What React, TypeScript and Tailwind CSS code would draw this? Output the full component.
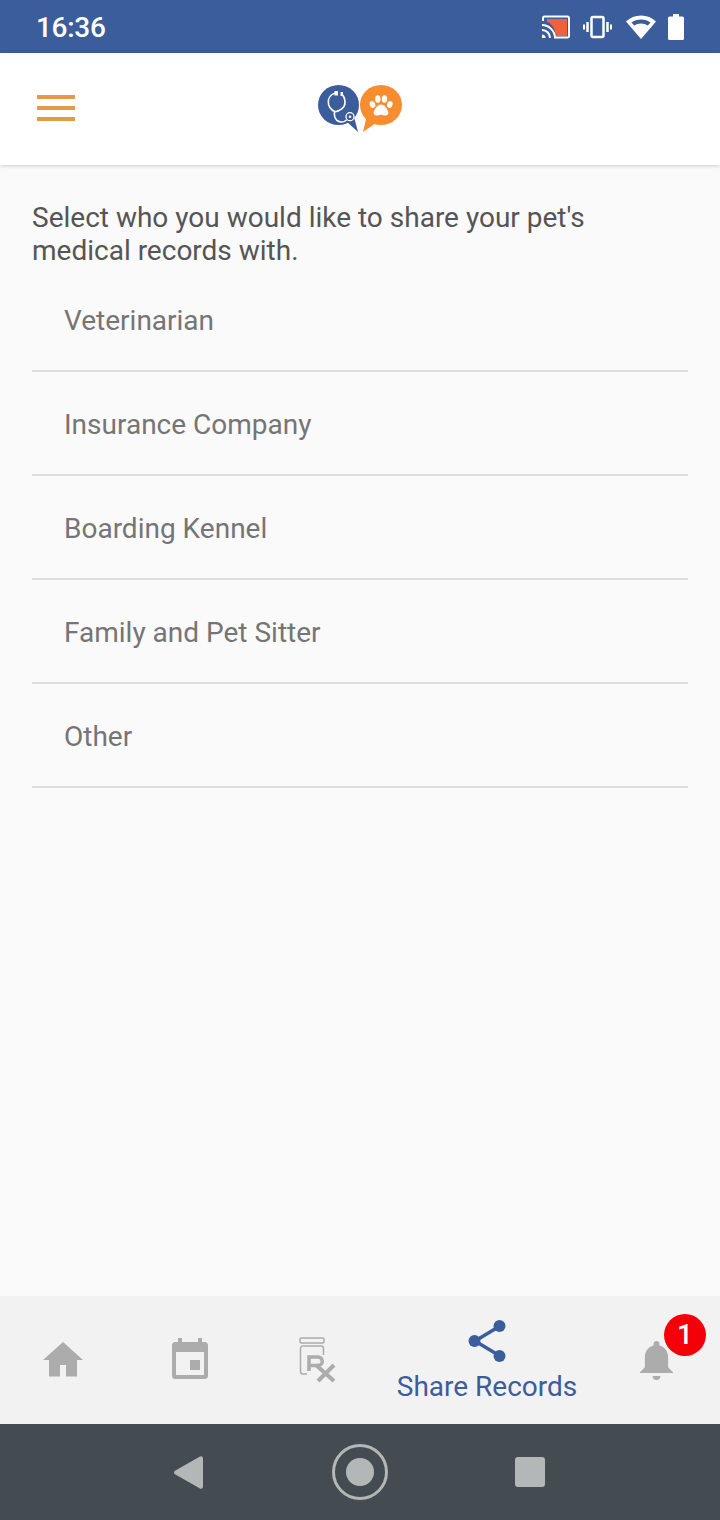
const ROWS = ["Veterinarian", "Insurance Company", "Boarding Kennel", "Family and Pet Sitter", "Other"];

function StatusIcons() {
  return (
    <div className="flex items-center">
      {/* cast */}
      <svg width="30" height="24" viewBox="0 0 30 24" className="mr-[12px]">
        <path d="M6 4h20v17H15C14 13.500 10.500 8 6 7z" fill="#f0603a" />
        <path d="M2 6V3A1.500 1.500 0 0 1 3.500 1.500h23A1.500 1.500 0 0 1 28 3v18a1.500 1.500 0 0 1-1.500 1.500H13" fill="none" stroke="#fff" strokeWidth="2" />
        <path d="M1 10c7 0 13 6 13 13M1 15c4.500 0 8 3.500 8 8" fill="none" stroke="#fff" strokeWidth="2" />
        <path d="M1 19.500a3.500 3.500 0 0 1 3.500 3.500H1z" fill="#fff" />
      </svg>
      {/* vibrate */}
      <svg width="29" height="24" viewBox="0 0 29 24" className="mr-[14px]">
        <rect x="8.500" y="2" width="12" height="20" rx="1.500" fill="none" stroke="#fff" strokeWidth="2.500" />
        <path d="M4.500 7v10M24.500 7v10" stroke="#fff" strokeWidth="2.500" />
        <path d="M1 9.500v5M28 9.500v5" stroke="#fff" strokeWidth="2" />
      </svg>
      {/* wifi */}
      <svg width="30" height="24" viewBox="0 0 30 24" className="mr-[12px]">
        <path d="M15 24 0 6.500C4 2.800 9.200 0.500 15 0.500S26 2.800 30 6.500z" fill="#fff" />
        <path d="M5.500 7.500C8 5.700 11.300 4.500 15 4.500s7 1.200 9.500 3l-2.700 3.100C19.900 9.300 17.600 8.500 15 8.500s-4.900.8-6.800 2.100z" fill="#3b5d9b" />
      </svg>
      {/* battery */}
      <svg width="16" height="26" viewBox="0 0 16 26">
        <path d="M5 0h6v2.500h3.500A1.500 1.500 0 0 1 16 4v20.500a1.500 1.500 0 0 1-1.500 1.500h-13A1.500 1.500 0 0 1 0 24.500V4a1.500 1.500 0 0 1 1.500-1.500H5z" fill="#fff" />
      </svg>
    </div>
  );
}

function Logo() {
  return (
    <svg width="86" height="48" viewBox="0 0 86 48">
      {/* blue bubble */}
      <ellipse cx="20.500" cy="20" rx="20.500" ry="20" fill="#3b5d9b" />
      <path d="M28 36l7-8 5 19z" fill="#3b5d9b" />
      {/* stethoscope */}
      <path d="M17 8.300c-4 1-6.700 4.500-6.700 8.400 0 4.500 2.500 8 6.700 10 4.500-.5 10-4 10-9 0-3.500-1-6.500-3.300-8.200" fill="none" stroke="#fff" strokeWidth="1.600" />
      <path d="M16.500 26.700c-.5 4 .5 7 2.500 8.800 3 2 7 1.800 9.500-.5" fill="none" stroke="#fff" strokeWidth="1.600" />
      <circle cx="32" cy="31.700" r="4" fill="none" stroke="#fff" strokeWidth="1.300" />
      <circle cx="32" cy="31.700" r="1.300" fill="#fff" />
      <path d="M16.500 6h3.500v4.500h-3.500zM22.500 7h2.500v4h-2.500z" fill="#fff" />
      {/* orange bubble */}
      <ellipse cx="63" cy="20" rx="21" ry="20" fill="#f78d2e" />
      <path d="M49 30l9 8-13 9z" fill="#f78d2e" />
      {/* paw */}
      <ellipse cx="54.500" cy="19.500" rx="2.700" ry="3.500" transform="rotate(-20 54.500 19.500)" fill="#fff" />
      <ellipse cx="59.800" cy="14" rx="2.700" ry="3.800" fill="#fff" />
      <ellipse cx="66.500" cy="14" rx="2.700" ry="3.800" fill="#fff" />
      <ellipse cx="71.800" cy="19.500" rx="2.700" ry="3.500" transform="rotate(20 71.800 19.500)" fill="#fff" />
      <path d="M63 19.500c-3 0-5 3-6.500 5.500-1.500 2.500-1 5 1.500 5.500 2 .3 3.300-.7 5-.7s3 1 5 .7c2.500-.5 3-3 1.500-5.500-1.500-2.500-3.500-5.500-6.500-5.500z" fill="#fff" />
    </svg>
  );
}

function RxIcon() {
  return (
    <svg width="37" height="46" viewBox="0 0 37 46">
      <rect x="1" y="1" width="24" height="5" rx="1.500" fill="none" stroke="#acacac" strokeWidth="1.500" />
      <path d="M8 37H4a2.500 2.500 0 0 1-2.500-2.500V11.500A2.500 2.500 0 0 1 4 9h18a2.500 2.500 0 0 1 2.500 2.500V18" fill="none" stroke="#acacac" strokeWidth="1.500" />
      <path d="M10 34V20h9a4 4 0 0 1 0 8.500H10" fill="none" stroke="#acacac" strokeWidth="3.500" />
      <path d="M17 28l18 16M35 28 19 44" fill="none" stroke="#acacac" strokeWidth="4" />
    </svg>
  );
}

export default function App() {
  return (
    <div className="flex h-[1520px] w-[720px] flex-col overflow-hidden bg-[#fafafa] font-['Roboto',sans-serif]">
      <div className="flex h-[53px] shrink-0 items-center justify-between bg-[#3b5d9b] pl-[36px] pr-[36px]">
        <span className="pt-[2px] text-[28px] font-medium leading-none tracking-[-0.3px] text-white">16:36</span>
        <StatusIcons />
      </div>

      <header className="relative flex h-[112px] shrink-0 items-center bg-white shadow-[0_1px_4px_rgba(0,0,0,0.18)]">
        <button className="mb-[2px] ml-[37px] flex w-[38px] flex-col gap-[7px]">
          <span className="h-[4px] bg-[#e49a48]" />
          <span className="h-[4px] bg-[#e49a48]" />
          <span className="h-[4px] bg-[#e49a48]" />
        </button>
        <div className="ml-[243px]">
          <Logo />
        </div>
      </header>

      <main className="flex-1 px-[32px] pt-[36px]">
        <p className="mb-[1px] text-[28px] leading-[33px] text-[#555555]">
          Select who you would like to share your pet's medical records with.
        </p>
        <ul>
          {ROWS.map((row) => (
            <li
              key={row}
              className="flex h-[104px] items-center border-b-2 border-[#dedede] pl-[32px] pt-[4px] text-[28px] text-[#757575]"
            >
              {row}
            </li>
          ))}
        </ul>
      </main>

      <nav className="flex h-[128px] shrink-0 bg-[#f2f2f2]">
        <div className="flex w-[126px] items-center justify-center">
          <svg width="40" height="35" viewBox="0 0 40 35" className="mb-[2px]">
            <path d="M20 0 0 18h6v16.500h11V23h6v11.500h11V18h6z" fill="#acacac" />
          </svg>
        </div>
        <div className="flex w-[128px] items-center justify-center">
          <svg width="36" height="41" viewBox="0 0 36 41" className="mb-[3px]">
            <path fillRule="evenodd" d="M6 0h4v4h16V0h4v4h2.500A3.500 3.500 0 0 1 36 7.500v30a3.500 3.500 0 0 1-3.500 3.500h-29A3.500 3.500 0 0 1 0 37.500v-30A3.500 3.500 0 0 1 3.500 4H6zM4 14v23h28V14z" fill="#acacac" />
            <rect x="18" y="22" width="10" height="10" fill="#acacac" />
          </svg>
        </div>
        <div className="flex w-[127px] items-center justify-center">
          <RxIcon />
        </div>
        <div className="flex w-[212px] flex-col items-center pt-[24px]">
          <svg width="38" height="42" viewBox="0 0 38 42">
            <path d="M7 21 32 6M7 21l25 15" stroke="#3b5d9b" strokeWidth="3.500" />
            <circle cx="31.500" cy="6" r="6" fill="#3b5d9b" />
            <circle cx="6.500" cy="21" r="6" fill="#3b5d9b" />
            <circle cx="31.500" cy="36" r="6" fill="#3b5d9b" />
          </svg>
          <span className="mt-[8px] text-[28px] leading-[33px] text-[#3b5d9b]">Share Records</span>
        </div>
        <div className="relative flex w-[127px] items-center justify-center">
          <svg width="33" height="39" viewBox="0 0 34 40" className="mt-[1px]">
            <path d="M17 0a3 3 0 0 1 3 3v1.500c6 1.500 9 6.500 9 12.500v10l5 5v1H0v-1l5-5V17c0-6 3-11 9-12.500V3a3 3 0 0 1 3-3z" fill="#acacac" />
            <path d="M13 36h8a4 4 0 0 1-8 0z" fill="#acacac" />
          </svg>
          <span className="absolute left-[71px] top-[18px] flex h-[42px] w-[42px] items-center justify-center rounded-full bg-[#f40009] text-[28px] font-medium text-white">
            1
          </span>
        </div>
      </nav>

      <div className="flex h-[96px] shrink-0 items-center bg-[#444c52] pl-[174px]">
        <svg width="29" height="33" viewBox="0 0 29 33">
          <path d="M1 18.200a2 2 0 0 1 0-3.400L26 .5a2 2 0 0 1 3 1.700v28.600a2 2 0 0 1-3 1.700z" fill="#b4b7b8" />
        </svg>
        <div className="ml-[129px] flex h-[56px] w-[56px] items-center justify-center rounded-full border-[3px] border-[#b4b7b8]">
          <div className="h-[28px] w-[28px] rounded-full bg-[#b4b7b8]" />
        </div>
        <div className="ml-[127px] h-[30px] w-[30px] rounded-[3px] bg-[#b4b7b8]" />
      </div>
    </div>
  );
}
